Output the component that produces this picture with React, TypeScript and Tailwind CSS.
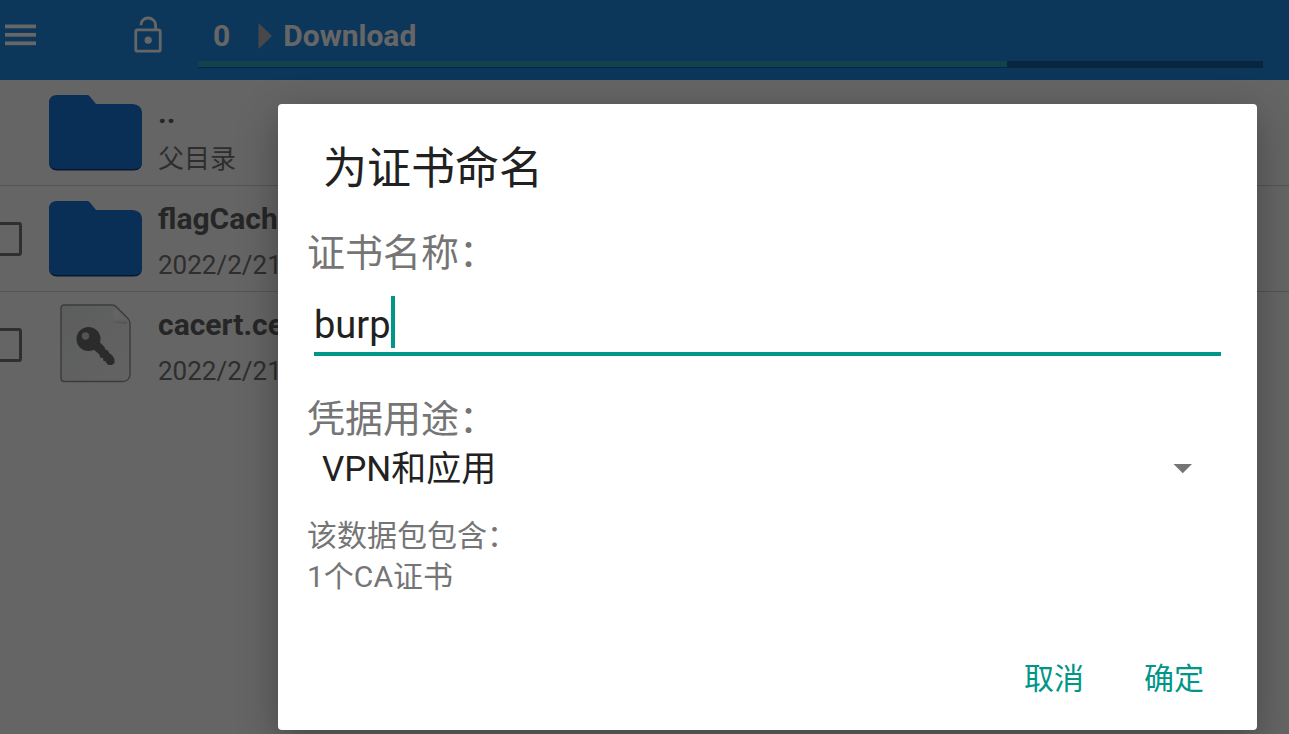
import { useState } from "react";

function MenuIcon() {
  return (
    <svg viewBox="0 0 32 22" className="h-[22px] w-8" fill="currentColor">
      <rect x="0" y="0.5" width="31" height="3.8" />
      <rect x="0" y="8.9" width="31" height="3.8" />
      <rect x="0" y="17.4" width="31" height="3.8" />
    </svg>
  );
}

function LockIcon() {
  return (
    <svg viewBox="0 0 28 37" className="h-[37px] w-7" fill="none" stroke="currentColor" strokeWidth="2.8">
      <rect x="1.8" y="13.8" width="24.4" height="21.4" rx="1.8" />
      <path d="M7 9.200C7 5 10 2 14 2s7.600 3 7.600 7.200v4.400" />
      <circle cx="14.2" cy="24.2" r="3.6" fill="currentColor" stroke="none" />
    </svg>
  );
}

function FolderIcon() {
  return (
    <svg viewBox="0 0 94 78" className="h-[78px] w-[94px]">
      <path
        d="M9 2H39Q40.500 2 41.500 3L48 11H85Q94 12 94 20V68Q94 76.500 86 76.500H9Q1 76.500 1 68V10Q1 2 9 2Z"
        fill="#0e4279"
      />
      <path
        d="M9 1H39Q40.500 1 41.500 2L48 10H85Q94 11 94 19V67Q94 75 86 75H9Q1 75 1 67V9Q1 1 9 1Z"
        fill="#1976d6"
      />
    </svg>
  );
}

function CertificateIcon() {
  return (
    <svg viewBox="0 0 71 79" className="mb-1 h-[79px] w-[71px]">
      <defs>
        <linearGradient id="paper" x1="0" y1="0" x2="1" y2="1">
          <stop offset="0" stopColor="#e6e8ea" />
          <stop offset="1" stopColor="#f8f8f8" />
        </linearGradient>
        <linearGradient id="fold" x1="0" y1="0" x2="0" y2="1">
          <stop offset="0" stopColor="#ffffff" />
          <stop offset="0.75" stopColor="#f6f6f6" />
          <stop offset="1" stopColor="#c4c6c8" />
        </linearGradient>
      </defs>
      <path
        d="M4.500 1H52Q54.500 1 56.500 3L67.500 14Q70 16.500 70 19V71Q69 77 63 77.500H4.500Q1 77.500 1 74V4.500Q1 1 4.500 1Z"
        fill="url(#paper)"
        stroke="#8f9598"
        strokeWidth="1.4"
        strokeLinejoin="round"
      />
      <path d="M53.500 4V18.500L67 20V15.500Z" fill="url(#fold)" />
      <circle cx="28.5" cy="35" r="12" fill="#6c6c6c" />
      <path
        d="M33 45L38.500 37L44.500 43L45.500 45.500L48 46.500L49.500 49.500L52 51L54.500 55V59L52 61H48.500L46.500 59.500L46 57.500L43.500 57L43 54L40 53.500L39.500 50.500Z"
        fill="#6c6c6c"
      />
      <circle cx="25.5" cy="32" r="3.7" fill="#d2d2d2" />
    </svg>
  );
}

type Entry = { name: string; detail: string; kind: "parent" | "folder" | "cert" };

const entries: Entry[] = [
  { name: "..", detail: "父目录", kind: "parent" },
  { name: "flagCache", detail: "2022/2/21", kind: "folder" },
  { name: "cacert.cer", detail: "2022/2/21", kind: "cert" },
];

function FileRow({ entry }: { entry: Entry }) {
  return (
    <li
      className={
        entry.kind === "cert"
          ? "flex h-[106px] items-center"
          : "flex h-[106px] items-center border-b border-[#d2d2d2]"
      }
    >
      <div className="flex w-12 shrink-0">
        {entry.kind !== "parent" && (
          <input
            type="checkbox"
            aria-label={entry.name}
            className="-ml-3 size-[34px] appearance-none rounded-[3px] border-[3px] border-[#757575]"
          />
        )}
      </div>
      <div className="flex w-[94px] shrink-0 justify-center">
        {entry.kind === "cert" ? <CertificateIcon /> : <FolderIcon />}
      </div>
      <div className="flex flex-col gap-1 pt-1.5 pl-4">
        <span className="text-[30px] leading-[42px] font-bold text-[#606060]">{entry.name}</span>
        <span className="text-[26px] leading-[42px] text-[#747474]">{entry.detail}</span>
      </div>
    </li>
  );
}

export default function App() {
  const [name, setName] = useState("burp");

  return (
    <div className="min-h-screen overflow-hidden bg-[#fcfcfc] font-[Roboto,'Noto_Sans_CJK_SC',sans-serif]">
      <header className="flex h-20 bg-[#2087e1] text-white">
        <button type="button" aria-label="菜单" className="flex h-[70px] w-[129px] shrink-0 items-center pl-[5px]">
          <MenuIcon />
        </button>
        <button type="button" aria-label="锁定" className="flex h-[69px] w-[69px] shrink-0 items-center pl-[5px]">
          <LockIcon />
        </button>
        <div className="mr-[26px] flex flex-1 flex-col">
          <nav className="flex h-[61px] items-center pt-2.5 pl-[15px] text-[30px] leading-9 font-bold">
            <a href="#root">0</a>
            <svg viewBox="0 0 14 26" className="mr-[11px] ml-7 h-[26px] w-3.5" fill="#b4b4b4">
              <path d="M0.500 0L14 13L0.500 26Z" />
            </svg>
            <a href="#download">Download</a>
          </nav>
          <div className="h-[7px] bg-[#16619f]">
            <div className="h-1.5 w-[76%] bg-[#2ca5c4]" />
          </div>
        </div>
      </header>
      <ul>
        {entries.map((entry) => (
          <FileRow key={entry.name} entry={entry} />
        ))}
      </ul>

      <div className="absolute inset-0 bg-black/60 pt-[104px] pr-8 pb-1 pl-[278px]">
        <section
          role="dialog"
          aria-labelledby="dialog-title"
          className="rounded-[4px] bg-white pt-[39px] pb-[21px] text-[#212121] shadow-[0_12px_40px_rgba(0,0,0,0.3)]"
        >
          <h1 id="dialog-title" className="px-[45px] text-[44px] leading-[52px]">
            为证书命名
          </h1>
          <label htmlFor="cert-name" className="mt-[34px] block px-[29px] text-[38px] leading-[48px] text-[#757575]">
            证书名称：
          </label>
          <div className="mx-9 mt-[15px] flex h-16 items-center border-b-4 border-[#009688]">
            <input
              id="cert-name"
              type="text"
              value={name}
              onChange={(e) => setName(e.target.value)}
              className="field-sizing-content h-[52px] pt-1.5 text-[38px] caret-transparent outline-none"
            />
            <span className="h-[52px] w-1 bg-[#009688]" />
          </div>
          <label htmlFor="cert-use" className="mt-[39px] block px-[29px] text-[38px] leading-[48px] text-[#757575]">
            凭据用途：
          </label>
          <div className="mr-16 ml-11 flex h-[52px] items-center">
            <select id="cert-use" className="h-[52px] flex-1 appearance-none pt-px text-[35px] outline-none">
              <option>VPN和应用</option>
            </select>
            <svg viewBox="0 0 20 10" className="h-2.5 w-5" fill="#757575">
              <path d="M0.500 0H19L9.750 9.200Z" />
            </svg>
          </div>
          <div className="mt-5 px-[29px] text-[30px] leading-[41px] text-[#757575]">
            <p>该数据包包含：</p>
            <p>1个CA证书</p>
          </div>
          <div className="mt-[52px] flex justify-end gap-7 px-[37px] text-[30px] leading-[60px] text-[#009688]">
            <button type="button" className="px-4">
              取消
            </button>
            <button type="button" className="px-4">
              确定
            </button>
          </div>
        </section>
      </div>
    </div>
  );
}
